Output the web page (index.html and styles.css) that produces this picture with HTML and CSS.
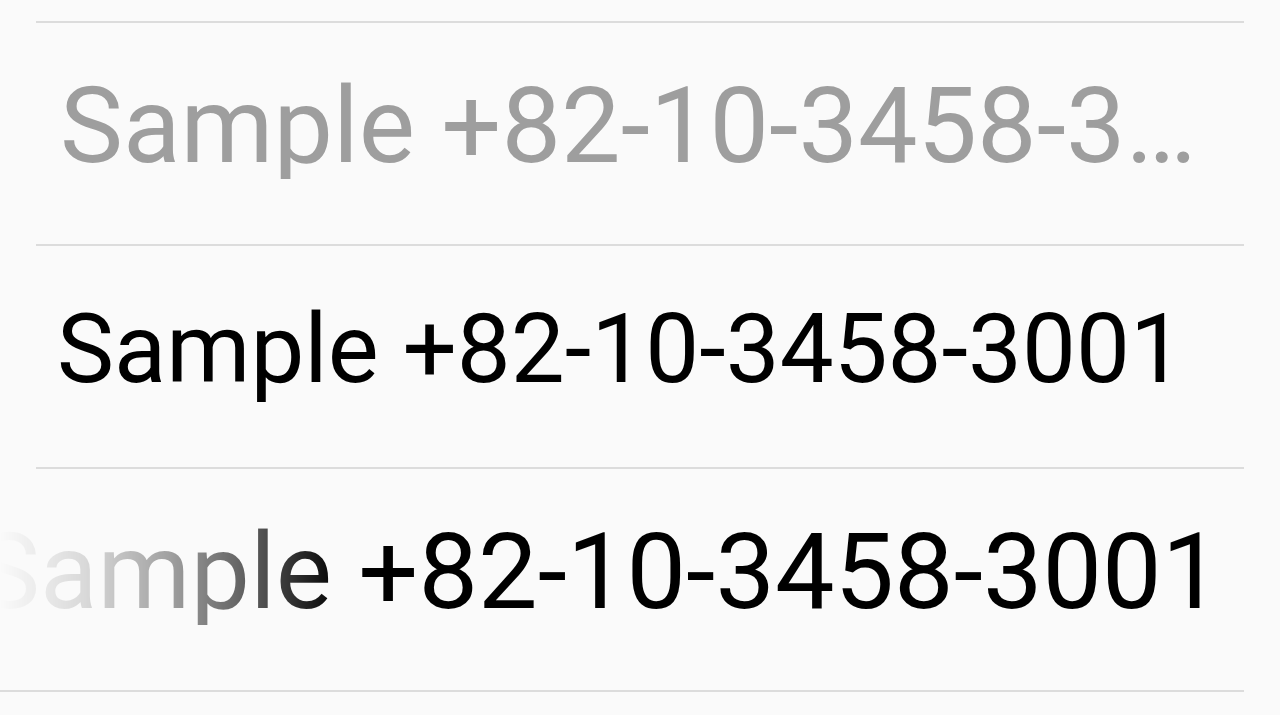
FILE: index.html
```html
<!DOCTYPE html>
<html>
    <head>
        <link rel="stylesheet" href="styles.css">
    </head>
    <body>
        <div class="list">
            <div class="row">
                <p class="name ellipsis">Sample +82-10-3458-3001</p>
            </div>
            <div class="row">
                <p class="name selected">Sample +82-10-3458-3001</p>
            </div>
            <div class="row marquee">
                <p class="name scrolling">Sample +82-10-3458-3001</p>
            </div>
        </div>
    </body>
</html>
```

FILE: styles.css
```css
html,body {
    margin: 0;
    width: 100%;
    height: 100%;
    overflow: hidden;
    font-family: Roboto, "Liberation Sans", Arial, sans-serif;
    background-color: #FAFAFA;
}

.list {
    margin: 21px 36px 0 36px;
    border-top: 2px solid #DCDCDC;
}

.row {
    height: 221px;
    border-bottom: 2px solid #DCDCDC;
    display: flex;
    align-items: center;
    padding: 0 36px 0 24px;
}

.name {
    margin: 0 0 16px 0;
    font-size: 106px;
    line-height: 1;
    white-space: nowrap;
    color: #000000;
}

.ellipsis {
    color: #9E9E9E;
    overflow: hidden;
    text-overflow: ellipsis;
}

.selected {
    font-size: 96px;
    margin-left: -3px;
}

/* marquee: text runs to the screen edge and fades in from the left */
.marquee {
    margin-left: -36px;
    padding-left: 0;
}

.scrolling {
    transform: translateX(-23px);
    -webkit-mask-image: linear-gradient(to right, rgba(0,0,0,0) 23px, rgba(0,0,0,0.13) 108px, rgba(0,0,0,0.36) 193px, rgba(0,0,0,0.65) 278px, #000 363px);
    mask-image: linear-gradient(to right, rgba(0,0,0,0) 23px, rgba(0,0,0,0.13) 108px, rgba(0,0,0,0.36) 193px, rgba(0,0,0,0.65) 278px, #000 363px);
}
```
